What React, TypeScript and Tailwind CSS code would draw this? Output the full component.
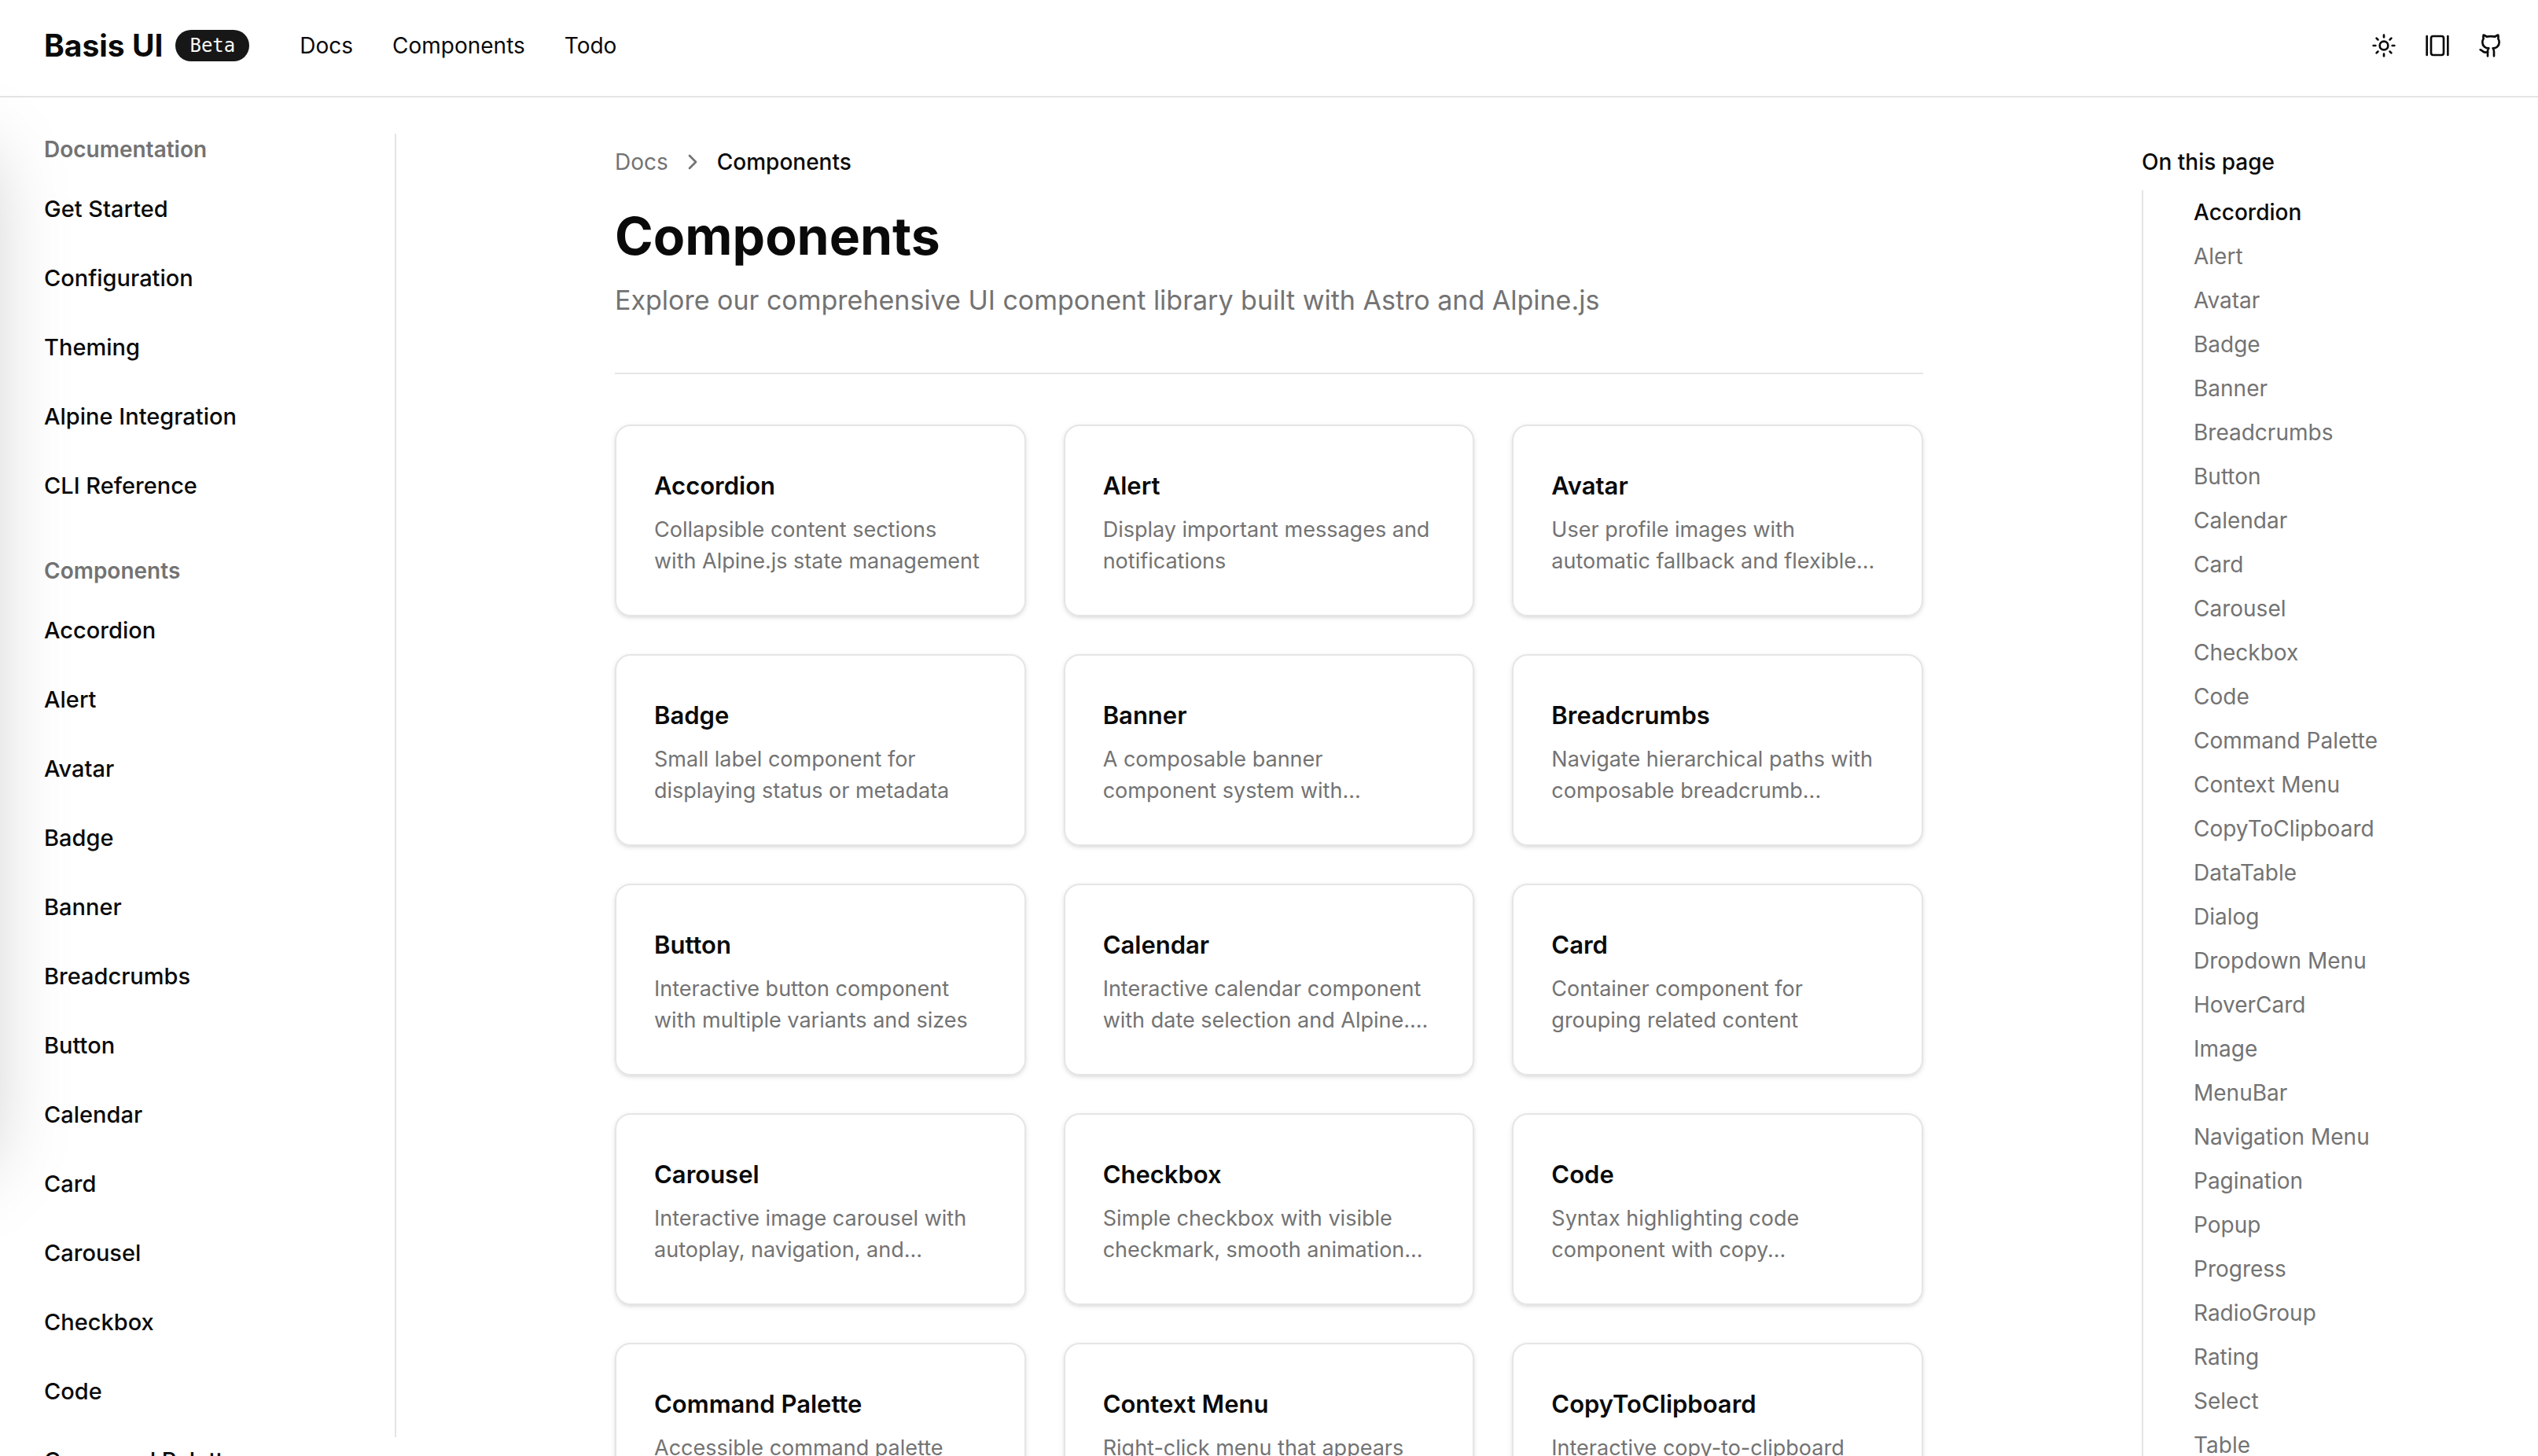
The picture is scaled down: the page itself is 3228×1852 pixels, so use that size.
import React from "react";
import { ChevronRight, GalleryHorizontal, Github, Sun } from "lucide-react";

const docs = ["Get Started", "Configuration", "Theming", "Alpine Integration", "CLI Reference"];

const sidebarComponents = [
  "Accordion", "Alert", "Avatar", "Badge", "Banner", "Breadcrumbs", "Button",
  "Calendar", "Card", "Carousel", "Checkbox", "Code", "Command Palette",
];

const toc = [
  "Accordion", "Alert", "Avatar", "Badge", "Banner", "Breadcrumbs", "Button", "Calendar",
  "Card", "Carousel", "Checkbox", "Code", "Command Palette", "Context Menu",
  "CopyToClipboard", "DataTable", "Dialog", "Dropdown Menu", "HoverCard", "Image",
  "MenuBar", "Navigation Menu", "Pagination", "Popup", "Progress", "RadioGroup",
  "Rating", "Select", "Table",
];

const cards: { title: string; lines: string[] }[] = [
  { title: "Accordion", lines: ["Collapsible content sections", "with Alpine.js state management"] },
  { title: "Alert", lines: ["Display important messages and", "notifications"] },
  { title: "Avatar", lines: ["User profile images with", "automatic fallback and flexible..."] },
  { title: "Badge", lines: ["Small label component for", "displaying status or metadata"] },
  { title: "Banner", lines: ["A composable banner", "component system with..."] },
  { title: "Breadcrumbs", lines: ["Navigate hierarchical paths with", "composable breadcrumb..."] },
  { title: "Button", lines: ["Interactive button component", "with multiple variants and sizes"] },
  { title: "Calendar", lines: ["Interactive calendar component", "with date selection and Alpine...."] },
  { title: "Card", lines: ["Container component for", "grouping related content"] },
  { title: "Carousel", lines: ["Interactive image carousel with", "autoplay, navigation, and..."] },
  { title: "Checkbox", lines: ["Simple checkbox with visible", "checkmark, smooth animation..."] },
  { title: "Code", lines: ["Syntax highlighting code", "component with copy..."] },
  { title: "Command Palette", lines: ["Accessible command palette"] },
  { title: "Context Menu", lines: ["Right-click menu that appears"] },
  { title: "CopyToClipboard", lines: ["Interactive copy-to-clipboard"] },
];

function Header() {
  return (
    <header className="flex items-start border-b-2 border-neutral-200 px-14 pt-8 pb-[38px]">
      <div className="flex h-[52px] items-center">
        <a href="#home" className="text-[39px] leading-[52px] font-bold">Basis UI</a>
        <span className="ml-4 flex h-10 items-center rounded-full bg-neutral-900 px-[18px] font-['DejaVu_Sans_Mono',monospace] text-[24px] text-neutral-50">
          Beta
        </span>
        <nav className="ml-16 flex gap-[50px] text-[28px] leading-10">
          <a href="#docs">Docs</a>
          <a href="#components">Components</a>
          <a href="#todo">Todo</a>
        </nav>
      </div>
      <div className="-mr-3 ml-auto flex h-[52px] items-center gap-9">
        <button type="button" aria-label="Toggle theme"><Sun size={32} /></button>
        <button type="button" aria-label="Toggle layout width"><GalleryHorizontal size={32} /></button>
        <a href="#github" aria-label="GitHub"><Github size={32} /></a>
      </div>
    </header>
  );
}

function SidebarGroup({ title, items }: { title: string; items: string[] }) {
  return (
    <section>
      <h2 className="text-[28px] leading-10 font-semibold text-neutral-500">{title}</h2>
      <ul className="mt-3">
        {items.map((item) => (
          <li key={item}>
            <a href="#item" className="block py-6 text-[29px] leading-10 font-medium">{item}</a>
          </li>
        ))}
      </ul>
    </section>
  );
}

export default function App() {
  return (
    <div className="flex h-screen flex-col overflow-hidden bg-white font-['Inter',sans-serif] text-neutral-950">
      <Header />
      <div className="relative flex min-h-0 flex-1">
        <div aria-hidden="true" className="absolute top-0 right-full h-[1330px] w-96 shadow-[0_50px_100px_-24px_rgba(0,0,0,0.25)]" />
        <aside className="w-[504px] shrink-0 pt-[46px] pb-6">
          <div className="flex h-full flex-col gap-11 border-r-2 border-neutral-200 pl-14">
            <SidebarGroup title="Documentation" items={docs} />
            <SidebarGroup title="Components" items={sidebarComponents} />
          </div>
        </aside>
        <main className="flex-1 px-[278px] pt-[62px]">
          <nav aria-label="Breadcrumb" className="flex items-center text-[28px] leading-10">
            <a href="#docs" className="text-neutral-500">Docs</a>
            <ChevronRight size={32} className="mx-[15px] text-neutral-500" />
            <span className="font-medium">Components</span>
          </nav>
          <h1 className="mt-[34px] text-[66px] leading-[80px] font-bold">Components</h1>
          <p className="mt-[10px] text-[34px] leading-[64px] text-neutral-500">
            Explore our comprehensive UI component library built with Astro and Alpine.js
          </p>
          <hr className="mt-[60px] border-t-2 border-neutral-200" />
          <div className="mt-16 grid grid-cols-3 gap-12">
            {cards.map((card) => (
              <a key={card.title} href="#card" className="block rounded-[20px] border-2 border-neutral-200 p-12 shadow-[0_2px_6px_rgba(0,0,0,0.1),0_2px_4px_-2px_rgba(0,0,0,0.1)]">
                <h3 className="mb-2 text-[31px] leading-[56px] font-semibold">{card.title}</h3>
                <p className="text-[27px] leading-10 whitespace-nowrap text-neutral-500">
                  {card.lines.map((line) => (
                    <span key={line} className="block">{line}</span>
                  ))}
                </p>
              </a>
            ))}
          </div>
        </main>
        <aside className="w-[504px] shrink-0 pt-[62px]">
          <h2 className="text-[28px] leading-10 font-medium">On this page</h2>
          <ul className="mt-4 border-l-2 border-neutral-200 pl-16 text-[28px] leading-[56px] text-neutral-500">
            {toc.map((item, i) => (
              <li key={item} className={i === 0 ? "font-medium text-neutral-950" : ""}>
                <a href="#section">{item}</a>
              </li>
            ))}
          </ul>
        </aside>
      </div>
    </div>
  );
}
